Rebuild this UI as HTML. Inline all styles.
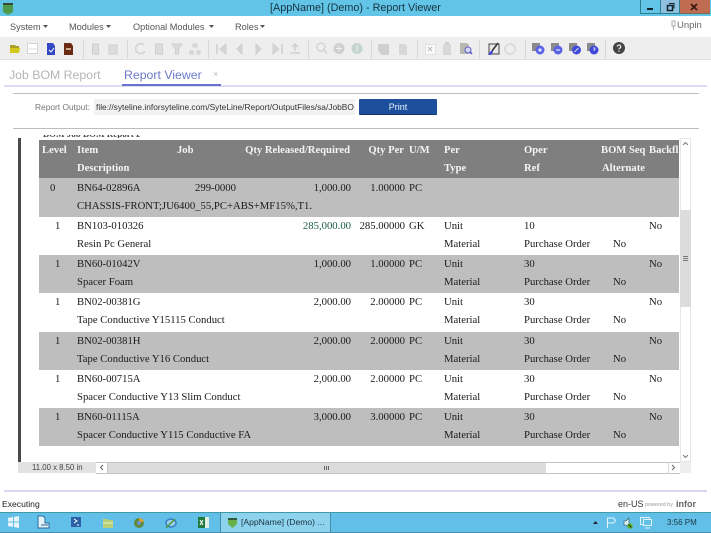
<!DOCTYPE html>
<html lang="en"><head><meta charset="utf-8"><title>Report Viewer</title>
<style>
*{box-sizing:border-box}
html,body{margin:0;padding:0;width:711px;height:533px;overflow:hidden;background:#fff}
body{position:relative;font-family:"Liberation Sans",sans-serif;color:#222;filter:blur(.3px)}
.b{position:absolute}
.t{position:absolute;white-space:nowrap}
svg{position:absolute;left:0;top:0}
.m{font-size:9.2px;color:#555;top:21px;line-height:12px}
.r{position:absolute;left:39px;width:640px;height:38px;overflow:hidden;font:10.7px/14px "Liberation Serif",serif;color:#1a1a1a}
.r span{position:absolute;white-space:nowrap}
.g{background:#bebebe}
.a{top:2px}.c{top:20px}
.lv{left:16px}.it{left:38px}.q{right:328px}.qp{right:274px}.um{left:370px}.pe{left:405px}.op{left:485px}.al{left:574px}.bf{left:610px}
.h{background:#7f7f7f;color:#f4f4f4;font-weight:bold;top:140px;font-size:10.6px}
.h .a{top:4px}.h .c{top:22px}
</style></head><body>

<!-- title bar -->
<div class="b" style="left:0;top:0;width:711px;height:16px;background:#62c5e8"></div>
<div class="t" style="left:270px;top:1px;font-size:10.8px;line-height:14px;color:#17323f">[AppName] (Demo) - Report Viewer</div>
<div class="b" style="left:640px;top:0;width:21px;height:14px;background:#62c5e8;border:1px solid #2b7f8f;border-top:0"></div>
<div class="b" style="left:661px;top:0;width:19px;height:14px;background:#8fc0e0;border:1px solid #2b7f8f;border-top:0;border-left:0"></div>
<div class="b" style="left:680px;top:0;width:30px;height:14px;background:#c06c52;border-bottom:1px solid #7a6a50"></div>

<!-- menu -->
<div class="t m" style="left:10px">System</div>
<div class="t m" style="left:69px">Modules</div>
<div class="t m" style="left:133px">Optional Modules</div>
<div class="t m" style="left:235px">Roles</div>
<div class="t" style="left:677px;top:20px;font-size:9.5px;line-height:12px;color:#666">Unpin</div>

<!-- toolbar -->
<div class="b" style="left:0;top:37px;width:711px;height:23px;background:#eeeeee;border-bottom:1px solid #e2e2e2"></div>

<!-- tabs -->
<div class="t" style="left:9px;top:67px;font-size:12.3px;line-height:16px;color:#b5b5b5">Job BOM Report</div>
<div class="t" style="left:124px;top:67px;font-size:12.3px;line-height:16px;color:#6a78c8">Report Viewer</div>
<div class="t" style="left:213px;top:68px;font-size:9px;line-height:12px;color:#bbb">×</div>
<div class="b" style="left:4px;top:85px;width:703px;height:2px;background:#dcdcf4"></div>
<div class="b" style="left:122px;top:84px;width:99px;height:2px;background:#6a6fd0"></div>

<!-- report output -->
<div class="b" style="left:13px;top:93px;width:686px;height:1px;background:#bdbdbd"></div>
<div class="t" style="left:35px;top:101px;font-size:8.4px;line-height:12px;color:#777">Report Output:</div>
<div class="b" style="left:94px;top:99px;width:261px;height:16px;background:#f2f2f2"></div>
<div class="t" style="left:96px;top:101px;width:258px;overflow:hidden;font-size:8.4px;line-height:12px;color:#333">file://syteline.inforsyteline.com/SyteLine/Report/OutputFiles/sa/JobBOM</div>
<div class="b" style="left:359px;top:99px;width:78px;height:16px;background:#1e4f9c;border-radius:1px;border-bottom:1px solid #16386f"></div>
<div class="t" style="left:359px;top:101px;width:78px;text-align:center;font-size:9px;line-height:12px;color:#e8f6ff">Print</div>
<div class="b" style="left:13px;top:128px;width:686px;height:1px;background:#bdbdbd"></div>

<!-- report frame -->
<div class="b" style="left:18px;top:138px;width:3px;height:324px;background:#4a4a4a"></div>
<div class="t" style="left:43px;top:135px;height:3px;overflow:hidden;font:bold 9px/9px 'Liberation Serif',serif;color:#444;width:97px"><span style="position:relative;top:-5px">BOM Job BOM Report Date</span></div>

<!-- header -->
<div class="r h" style="height:38px">
<span style="left:3px" class="a">Level</span><span class="a it">Item</span><span class="a" style="left:138px">Job</span><span class="a" style="right:329px">Qty Released/Required</span><span class="a" style="right:275px">Qty Per</span><span class="a um">U/M</span><span class="a pe">Per</span><span class="a op">Oper</span><span class="a" style="left:562px">BOM Seq</span><span class="a bf">Backfl</span>
<span class="c it">Description</span><span class="c pe">Type</span><span class="c op">Ref</span><span class="c" style="left:563px">Alternate</span>
</div>

<div class="r g" style="top:178px;height:39px">
<span style="left:11px;top:3px">0</span><span class="it" style="top:3px">BN64-02896A</span><span style="left:156px;top:3px">299-0000</span><span class="q" style="top:3px">1,000.00</span><span class="qp" style="top:3px">1.00000</span><span class="um" style="top:3px">PC</span>
<span class="it" style="top:21px">CHASSIS-FRONT;JU6400_55,PC+ABS+MF15%,T1.</span>
</div>

<div class="r" style="top:217px">
<span class="a lv">1</span><span class="a it">BN103-010326</span><span class="a q" style="color:#1d5a4c">285,000.00</span><span class="a qp">285.00000</span><span class="a um">GK</span><span class="a pe">Unit</span><span class="a op">10</span><span class="a bf">No</span>
<span class="c it">Resin Pc General</span><span class="c pe">Material</span><span class="c op">Purchase Order</span><span class="c al">No</span>
</div>

<div class="r g" style="top:255px">
<span class="a lv">1</span><span class="a it">BN60-01042V</span><span class="a q">1,000.00</span><span class="a qp">1.00000</span><span class="a um">PC</span><span class="a pe">Unit</span><span class="a op">30</span><span class="a bf">No</span>
<span class="c it">Spacer Foam</span><span class="c pe">Material</span><span class="c op">Purchase Order</span><span class="c al">No</span>
</div>

<div class="r" style="top:293px">
<span class="a lv">1</span><span class="a it">BN02-00381G</span><span class="a q">2,000.00</span><span class="a qp">2.00000</span><span class="a um">PC</span><span class="a pe">Unit</span><span class="a op">30</span><span class="a bf">No</span>
<span class="c it">Tape Conductive Y15115 Conduct</span><span class="c pe">Material</span><span class="c op">Purchase Order</span><span class="c al">No</span>
</div>

<div class="r g" style="top:332px">
<span class="a lv">1</span><span class="a it">BN02-00381H</span><span class="a q">2,000.00</span><span class="a qp">2.00000</span><span class="a um">PC</span><span class="a pe">Unit</span><span class="a op">30</span><span class="a bf">No</span>
<span class="c it">Tape Conductive Y16 Conduct</span><span class="c pe">Material</span><span class="c op">Purchase Order</span><span class="c al">No</span>
</div>

<div class="r" style="top:370px">
<span class="a lv">1</span><span class="a it">BN60-00715A</span><span class="a q">2,000.00</span><span class="a qp">2.00000</span><span class="a um">PC</span><span class="a pe">Unit</span><span class="a op">30</span><span class="a bf">No</span>
<span class="c it">Spacer Conductive Y13 Slim Conduct</span><span class="c pe">Material</span><span class="c op">Purchase Order</span><span class="c al">No</span>
</div>

<div class="r g" style="top:408px">
<span class="a lv">1</span><span class="a it">BN60-01115A</span><span class="a q">3,000.00</span><span class="a qp">3.00000</span><span class="a um">PC</span><span class="a pe">Unit</span><span class="a op">30</span><span class="a bf">No</span>
<span class="c it">Spacer Conductive Y115 Conductive FA</span><span class="c pe">Material</span><span class="c op">Purchase Order</span><span class="c al">No</span>
</div>

<!-- scrollbars -->
<div class="b" style="left:680px;top:138px;width:11px;height:324px;background:#fff;border:1px solid #e6e6e6"></div>
<div class="b" style="left:680px;top:210px;width:11px;height:97px;background:#dcdcdc"></div>
<div class="b" style="left:18px;top:462px;width:78px;height:11px;background:#e2e2e2"></div>
<div class="t" style="left:32px;top:462px;font-size:7.8px;line-height:12px;color:#444">11.00 x 8.50 in</div>
<div class="b" style="left:96px;top:462px;width:584px;height:12px;background:#fff;border-top:1px solid #c4c4c4;border-bottom:1px solid #c4c4c4"></div>
<div class="b" style="left:107px;top:463px;width:439px;height:10px;background:#dcdcdc"></div>
<div class="b" style="left:107px;top:462px;width:1px;height:12px;background:#c4c4c4"></div>
<div class="b" style="left:668px;top:462px;width:1px;height:12px;background:#d8d8d8"></div>
<div class="b" style="left:680px;top:462px;width:11px;height:11px;background:#eeeeee"></div>

<!-- status -->
<div class="b" style="left:4px;top:490px;width:703px;height:2px;background:#d8d8f2"></div>
<div class="t" style="left:2px;top:499px;font-size:8.6px;line-height:11px;color:#222">Executing</div>
<div class="t" style="left:618px;top:499px;font-size:9px;line-height:11px;color:#333">en-US</div>
<div class="t" style="left:645px;top:501px;font-size:5.4px;line-height:8px;color:#999">powered by</div>
<div class="t" style="left:676px;top:498px;font-size:9px;line-height:12px;font-weight:bold;color:#666">infor</div>

<!-- taskbar -->
<div class="b" style="left:0;top:512px;width:711px;height:21px;background:#62c0e8;border-top:1px solid #3f9aa6;border-bottom:1px solid #4a8fb0"></div>
<div class="b" style="left:220px;top:513px;width:111px;height:19px;background:#8ed3ee;border-left:1px solid #3f8fa6;border-right:1px solid #3f8fa6"></div>
<div class="t" style="left:241px;top:516px;font-size:8.6px;line-height:13px;color:#1d3340">[AppName] (Demo) ...</div>
<div class="t" style="left:667px;top:516px;font-size:8px;line-height:13px;color:#1d3340">3:56 PM</div>

<!-- all icons -->
<svg width="711" height="533" viewBox="0 0 711 533" fill="none">
<!-- app icon -->
<path d="M3 3h10v9l-5 3-5-3z" fill="#4c9a4a"/><path d="M3 3h10v2H3z" fill="#2f4a35"/>
<!-- menu carets -->
<g fill="#555"><path d="M43 25h5l-2.500 3zM106 25h5l-2.500 3zM209 25h5l-2.500 3zM260 25h5l-2.500 3z"/></g>
<!-- window buttons -->
<path d="M647 8h6v2h-6z" fill="#10222a"/>
<rect x="667.500" y="5.500" width="5" height="5" stroke="#10222a" stroke-width="1.500"/><path d="M669 3.500h5v5" stroke="#10222a"/>
<path d="M691 4l6 6M697 4l-6 6" stroke="#3a1c14" stroke-width="1.800"/>
<!-- unpin -->
<path d="M672 21h3v5h-3zM673.500 26v4" stroke="#aaa"/>
<!-- toolbar group 1 -->
<path d="M10 45h5l1 1h3v2h-9z" fill="#a8a028"/><path d="M10 48h10l-1 5H10z" fill="#d4c81c"/>
<rect x="27.500" y="43.500" width="10" height="10" fill="#fff" stroke="#d4d4d4"/><path d="M27 49h11" stroke="#ddd"/>
<path d="M47 43h6l2 3v9H47z" fill="#3348c4"/><path d="M49 50l2 2 3-4" stroke="#fff"/>
<path d="M64 43h7l2 3v9h-9z" fill="#6b2a14"/><path d="M66 49h5" stroke="#e8d0b0" stroke-width="1.500"/>
<g fill="#dcdcdc" stroke="#cfcfcf">
<path d="M92.500 44h6v10h-6z"/><path d="M109 45h8v9h-8z"/>
<path d="M155.500 44h7v10h-7z"/>
<path d="M172 44h10l-3.500 5v5h-3v-5z"/>
<path d="M193 44h4v3h-4zM190 51h3v3h-3zM197 51h3v3h-3z"/>
</g>
<path d="M144 45a5 5 0 1 0 1 6" stroke="#d4d4d4" stroke-width="1.500"/>
<g stroke="#cfcfcf" fill="#d4d4d4">
<path d="M217 44v10" stroke-width="1.500"/><path d="M226 44l-6 5 6 5z"/>
<path d="M242 44l-5 5 5 5z"/>
<path d="M256 44l5 5-5 5z"/>
<path d="M273 44l6 5-6 5z"/><path d="M282 44v10" stroke-width="1.500"/>
<path d="M290 53h10M295 51v-6M292 47l3-3 3 3" fill="none" stroke-width="1.500"/>
</g>
<!-- separators -->
<g stroke="#d8d8d8">
<path d="M83.500 40v19M127.500 40v19M208.500 40v19M308.500 40v19M371.500 40v19M417.500 40v19M479.500 40v19M525.500 40v19M605.500 40v19"/>
</g>
<!-- search group -->
<circle cx="321" cy="47" r="4" stroke="#d4d4d4" stroke-width="1.500"/><path d="M324 50l3 4" stroke="#d4d4d4" stroke-width="1.500"/>
<circle cx="339" cy="48.500" r="5.500" fill="#cfcfcf"/><path d="M336 48.500h6M339 45.500v6" stroke="#f0f0f0"/>
<circle cx="357" cy="48.500" r="5.500" fill="#c4d4cc"/><path d="M357 45v7" stroke="#eef"/>
<path d="M378 44h11v11h-7l-4-4z" fill="#cfcfcf"/><path d="M399 44h6l2 2v9h-8z" fill="#d8d8d8"/>
<!-- xl etc -->
<rect x="425.500" y="44.500" width="10" height="10" fill="#fafafa" stroke="#e0e0e0"/><path d="M428 47l4 4M432 47l-4 4" stroke="#bbb"/>
<path d="M443 44h8v11h-8z" fill="#d8d8d8"/><path d="M445 42h4v2h-4z" fill="#ccc"/>
<path d="M460 43h7l2 2v9h-9z" fill="#b8b8b0"/><circle cx="468" cy="50" r="3" fill="#d8d8f4" stroke="#5a5ac8"/><path d="M470 52l2 2" stroke="#4a4ac0" stroke-width="1.500"/>
<!-- brush -->
<rect x="489" y="44" width="10" height="10" fill="#e8e8e8" stroke="#444"/>
<path d="M498 43l-6 8" stroke="#333" stroke-width="1.500"/><path d="M490 52l2-2 1 2-2 3h-3z" fill="#4646d8"/>
<circle cx="510" cy="49" r="5" stroke="#dcdcdc" stroke-width="2"/>
<!-- folder cog group -->
<g>
<path d="M532 43h8v8h-8z" fill="#8a8a8a"/><circle cx="540" cy="50" r="4.500" fill="#5a64e4"/><circle cx="540" cy="50" r="1.600" fill="#dfe8ff"/>
<path d="M551 43h8v8h-8z" fill="#8a8a8a"/><circle cx="558" cy="50" r="4.500" fill="#5a64e4"/><path d="M556 50h4" stroke="#fff"/>
<path d="M569 43h8v8h-8z" fill="#8a8a8a"/><circle cx="576.500" cy="50" r="4.500" fill="#3f4ad8"/><path d="M574.500 52l4-4" stroke="#cde"/>
<path d="M587 43h8v8h-8z" fill="#8a8a8a"/><circle cx="594" cy="50" r="4.500" fill="#3f4ad8"/><path d="M593 48h2v1l-1 1v1" stroke="#fff" stroke-width=".8"/>
</g>
<circle cx="619" cy="48" r="6" fill="#444"/><path d="M617.300 46.500a1.700 1.700 0 1 1 2.400 1.700c-.6.300-.7.700-.7 1.200M619 50.500v1.200" stroke="#eee" stroke-width="1.200"/>
<!-- scroll arrows -->
<path d="M683 145l2.500-2.500 2.500 2.500M683 455l2.500 2.500 2.500-2.500" stroke="#777"/>
<path d="M683 256.500h5M683 258.500h5M683 260.500h5" stroke="#777"/>
<path d="M103 465l-2.500 2.500 2.500 2.500M672 465l2.500 2.500-2.500 2.500" stroke="#666"/>
<path d="M324.500 466v4M326.500 466v4M328.500 466v4" stroke="#666"/>
<!-- task icons -->
<g fill="#e8f4fa"><path d="M8 518l5-1v4.500H8zM14 517l5-1v5.500h-5zM8 522.500h5v4.500l-5-1zM14 522.500h5v5.500l-5-1z"/></g>
<path d="M38 516h5l2 2v5h4v5H38z" fill="#e4f2f8" stroke="#2a6aa0"/><path d="M41 525h7" stroke="#2a6aa0"/>
<rect x="71" y="517" width="10" height="10" fill="#2c62a8"/><path d="M74 519l3 2-3 2M77 525h2" stroke="#fff"/>
<path d="M103 519h5l1 1h4v8h-10z" fill="#b8d078"/><path d="M103 523h10" stroke="#e8f0d0"/>
<circle cx="139" cy="523" r="5" fill="#5f8a3c"/><path d="M139 518a5 5 0 0 1 5 4h-5z" fill="#d8a028"/><circle cx="139" cy="523" r="2" fill="#6a90d8"/>
<ellipse cx="171" cy="523" rx="5" ry="4" stroke="#3a78c8" stroke-width="1.500" fill="#9bd0e8"/><path d="M166 528l9-9" stroke="#4f9a3c" stroke-width="1.500"/>
<rect x="198" y="517" width="10" height="11" fill="#1f7a3c"/><path d="M200 520l3 5M203 520l-3 5" stroke="#fff"/><rect x="205" y="517" width="4" height="11" fill="#e0f0e4"/>
<path d="M228 518h9v6l-4.500 4-4.500-4z" fill="#6ab04a"/><path d="M228 518h9v2h-9z" fill="#2f5a3a"/>
<!-- tray -->
<path d="M593 524l2.500-3 2.500 3z" fill="#223"/>
<path d="M607.500 518v10" stroke="#e8f6fc"/><path d="M607.500 518h6l2 2.500-2 2.500h-6z" fill="#62c0e8" stroke="#e8f6fc"/>
<path d="M624 521h2l3-3v10l-3-3h-2z" fill="#dfeff6" stroke="#2a4a5a" stroke-width=".6"/><circle cx="630" cy="526" r="2.800" fill="#5fb02a"/><path d="M628.500 524.500l3 3" stroke="#111" stroke-width=".8"/>
<rect x="640.500" y="517.500" width="9" height="7" stroke="#e0f2fa"/><rect x="643.500" y="519.500" width="8" height="6" stroke="#e0f2fa" fill="#62c0e8"/><path d="M645 528h5" stroke="#e0f2fa"/>
</svg>
</body></html>
